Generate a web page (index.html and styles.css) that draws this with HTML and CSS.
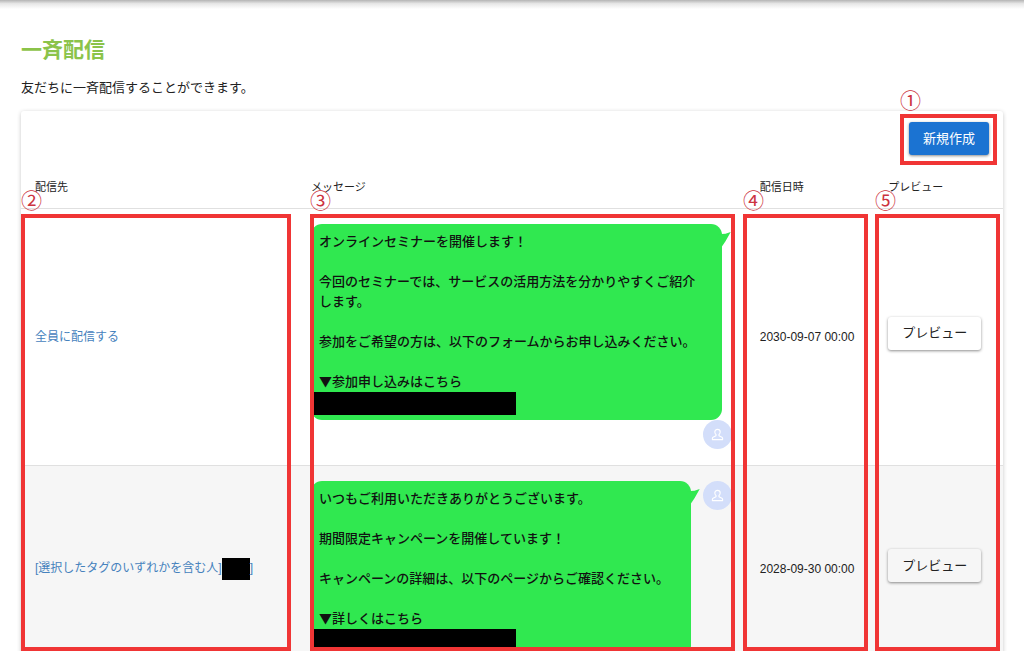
FILE: index.html
```html
<!DOCTYPE html>
<html lang="ja">
<head>
<meta charset="utf-8">
<meta name="viewport" content="width=device-width, initial-scale=1">
<title>一斉配信</title>
<link rel="stylesheet" href="styles.css">
</head>
<body>
<svg class="sprite" aria-hidden="true">
  <symbol id="person" viewBox="0 0 14 14">
    <path d="M7 1.500C5.200 1.500 4.100 2.700 4.100 4.300c0 1.200.6 2.100 1.300 2.700v1.300L2.200 9.900c-.5.300-.7.700-.7 1.200v1.400h11v-1.400c0-.5-.2-.9-.7-1.200L8.600 8.300V7c.7-.6 1.300-1.500 1.300-2.700C9.900 2.700 8.800 1.500 7 1.500z" fill="none" stroke="currentColor" stroke-width="1.200" stroke-linejoin="round"/>
  </symbol>
</svg>
<div class="shell">
  <div class="top-shadow"></div>
  <main class="page">
    <h1 class="page-title">一斉配信</h1>
    <p class="page-lead">友だちに一斉配信することができます。</p>
    <section class="card">
      <div class="toolbar">
        <button type="button" class="button button-primary">新規作成</button>
      </div>
      <table class="deliveries">
        <colgroup>
          <col class="col-target"><col class="col-message"><col class="col-date"><col class="col-preview">
        </colgroup>
        <thead>
          <tr>
            <th scope="col">配信先</th>
            <th scope="col">メッセージ</th>
            <th scope="col">配信日時</th>
            <th scope="col">プレビュー</th>
          </tr>
        </thead>
        <tbody>
          <tr>
            <td><a class="target" href="#">全員に配信する</a></td>
            <td>
              <div class="message">
                <div class="bubble bubble-wide">
                  <p class="bubble-text">オンラインセミナーを開催します！<br><br>今回のセミナーでは、サービスの活用方法を分かりやすくご紹介<br>します。<br><br>参加をご希望の方は、以下のフォームからお申し込みください。<br><br>▼参加申し込みはこちら</p>
                  <div class="redacted-line"></div>
                </div>
                <span class="avatar"><svg class="avatar-icon" aria-hidden="true"><use href="#person"/></svg></span>
              </div>
            </td>
            <td>2030-09-07 00:00</td>
            <td><button type="button" class="button">プレビュー</button></td>
          </tr>
          <tr>
            <td><a class="target" href="#">[選択したタグのいずれかを含む人]<span class="redacted-tag"></span>]</a></td>
            <td>
              <div class="message">
                <div class="bubble bubble-narrow">
                  <p class="bubble-text">いつもご利用いただきありがとうございます。<br><br>期間限定キャンペーンを開催しています！<br><br>キャンペーンの詳細は、以下のページからご確認ください。<br><br>▼詳しくはこちら</p>
                  <div class="redacted-line"></div>
                </div>
                <span class="avatar"><svg class="avatar-icon" aria-hidden="true"><use href="#person"/></svg></span>
              </div>
            </td>
            <td>2028-09-30 00:00</td>
            <td><button type="button" class="button">プレビュー</button></td>
          </tr>
        </tbody>
      </table>
    </section>
  </main>
  <div class="callout callout-create"><span class="callout-number">①</span></div>
  <div class="callout callout-target"><span class="callout-number">②</span></div>
  <div class="callout callout-message"><span class="callout-number">③</span></div>
  <div class="callout callout-date"><span class="callout-number">④</span></div>
  <div class="callout callout-preview"><span class="callout-number">⑤</span></div>
</div>
</body>
</html>
```
FILE: styles.css
```css
* {
  box-sizing: border-box;
}

body {
  margin: 0;
  background: #fff;
  color: #222;
  font-family: "Liberation Sans", "Noto Sans CJK JP", sans-serif;
  font-size: 12px;
  line-height: 20px;
}

.sprite {
  position: absolute;
  width: 0;
  height: 0;
}

.shell {
  position: relative;
  height: 100vh;
  overflow: hidden;
}

.top-shadow {
  height: 9px;
  background: linear-gradient(#b4b4b4, #e6e6e6 40%, #fff);
}

.page {
  padding: 25px 21px;
}

.page-title {
  margin: 0 0 12px;
  color: #8bc34a;
  font-size: 21px;
  line-height: 32px;
  font-weight: 700;
}

.page-lead {
  margin: 0 0 13px;
  font-size: 13px;
}

.card {
  background: #fff;
  border-radius: 3px;
  box-shadow: 0 1px 4px rgba(0, 0, 0, 0.22);
}

.toolbar {
  display: flex;
  justify-content: flex-end;
  padding: 11px 14px;
}

.button {
  height: 33px;
  padding: 0 14px;
  border: 0;
  border-radius: 3px;
  background: transparent;
  color: #222;
  font: inherit;
  font-size: 13px;
  box-shadow: 0 1px 3px rgba(0, 0, 0, 0.45);
}

.button-primary {
  background: #1b73d2;
  color: #fff;
}

.deliveries {
  width: 100%;
  table-layout: fixed;
  border-collapse: separate;
  border-spacing: 0;
}

.col-target {
  width: 28.1%;
}

.col-message {
  width: 45.7%;
}

.col-date {
  width: 13.1%;
}

.col-preview {
  width: 13.1%;
}

th {
  padding: 11px 14px;
  border-bottom: 1px solid #e0e0e0;
  font-size: 11px;
  font-weight: 400;
  text-align: left;
}

td {
  padding: 15px 14px 16px;
  border-bottom: 1px solid #e0e0e0;
  vertical-align: middle;
  white-space: nowrap;
}

td:last-child {
  padding: 8px 14px 16px;
}

tbody tr:nth-child(even) {
  background: #f6f6f6;
}

.target {
  color: #4682bd;
  text-decoration: none;
}

.redacted-tag {
  display: inline-block;
  width: 28px;
  height: 22px;
  background: #000;
  vertical-align: middle;
}

.message {
  display: flex;
  flex-wrap: wrap;
  align-items: flex-start;
}

.bubble {
  position: relative;
  padding: 7px 0 5px;
  border-radius: 11px;
  background: #30e850;
  color: #111;
}

.bubble::after {
  content: "";
  position: absolute;
  top: 8px;
  left: calc(100% - 4px);
  width: 13px;
  height: 15px;
  background: inherit;
  clip-path: polygon(0 15%, 60% 12%, 100% 0, 60% 62%, 30% 100%, 0 100%);
}

.bubble-wide {
  width: calc(100% - 10px);
}

.bubble-narrow {
  width: calc(100% - 41px);
}

.bubble-text {
  margin: 0 0 1px;
  padding: 0 8px;
  font-family: "Noto Sans CJK JP", sans-serif;
  font-size: 13px;
  font-weight: 500;
}

.redacted-line {
  width: 205px;
  height: 23px;
  background: #000;
}

.avatar {
  display: flex;
  align-items: center;
  justify-content: center;
  width: 29px;
  height: 29px;
  margin-left: auto;
  border-radius: 50%;
  background: #d3defa;
  color: #fff;
}

.avatar-icon {
  width: 13px;
  height: 13px;
}

.callout {
  position: absolute;
  bottom: 0;
  top: 214px;
  border: 4px solid #f03535;
  pointer-events: none;
}

.callout-number {
  position: absolute;
  left: -4px;
  bottom: 100%;
  margin-bottom: 8px;
  color: #cc3340;
  font-family: "Noto Sans CJK JP", sans-serif;
  font-size: 21px;
  line-height: 21px;
}

.callout-create {
  top: 114px;
  right: 27px;
  bottom: auto;
  width: 97px;
  height: 51px;
}

.callout-target {
  left: 21px;
  width: 270px;
}

.callout-message {
  left: 310px;
  width: 425px;
}

.callout-date {
  left: 743px;
  width: 125px;
}

.callout-preview {
  left: 875px;
  width: 125px;
}
```
